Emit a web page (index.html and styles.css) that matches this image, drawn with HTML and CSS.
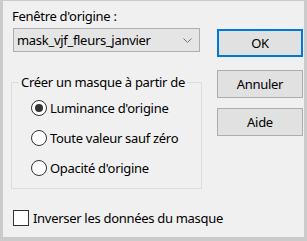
FILE: index.html
```html
<!DOCTYPE html>
<html lang="fr">
<head>
  <meta charset="UTF-8">
  <meta name="viewport" content="width=device-width, initial-scale=1.0">
  <title>Masque à partir d'une image</title>
  <link rel="stylesheet" href="styles.css">
</head>
<body>
  <div class="dialog">
    <div class="main">
      <div class="left">
        <div class="field-label">Fenêtre d'origine :</div>
        <div class="combo">
          <span>mask_vjf_fleurs_janvier</span>
          <svg class="chevron" width="9" height="5" viewBox="0 0 9 5">
            <path d="M0.5 0.5 L4.5 4.5 L8.5 0.5" fill="none" stroke="#707070" stroke-width="1"/>
          </svg>
        </div>

        <fieldset class="group">
          <legend>Créer un masque à partir de</legend>
          <label class="radio">
            <span class="dot checked"></span>Luminance d'origine
          </label>
          <label class="radio">
            <span class="dot"></span>Toute valeur sauf zéro
          </label>
          <label class="radio">
            <span class="dot"></span>Opacité d'origine
          </label>
        </fieldset>
      </div>

      <div class="buttons">
        <button type="button" class="btn default">OK</button>
        <button type="button" class="btn cancel">Annuler</button>
        <button type="button" class="btn">Aide</button>
      </div>
    </div>

    <label class="check">
      <span class="box"></span>Inverser les données du masque
    </label>
  </div>
</body>
</html>
```

FILE: styles.css
```css
body {
  margin: 0;
  background-color: #cbcbcb;
  font-family: "Noto Sans", "Open Sans", sans-serif;
  font-size: 13px;
  letter-spacing: -0.3px;
  color: #000;
}

.dialog {
  margin: 1px 3px 4px 3px;
  height: 236px;
  background-color: #f0f0f0;
  box-sizing: border-box;
}

.main {
  display: flex;
}

.left {
  width: 191px;
  margin-left: 8px;
}

.field-label {
  padding-top: 5px;
  padding-left: 1px;
  line-height: 20px;
}

.combo {
  display: flex;
  align-items: center;
  justify-content: space-between;
  margin: 2px 0 0 2px;
  width: 187px;
  height: 24px;
  padding: 0 7px 0 3px;
  box-sizing: border-box;
  background-color: #e5e5e5;
  border: 1px solid #adadad;
}

.group {
  margin: 20px 0 0 0;
  padding: 1px 0 5px 19px;
  border: 1px solid #dcdcdc;
  min-width: 0;
}

.group legend {
  margin-left: -12px;
  padding: 0 2px;
  line-height: 20px;
  white-space: nowrap;
}

.radio {
  display: flex;
  align-items: center;
  gap: 3px;
  height: 30px;
}

.dot {
  width: 16px;
  height: 16px;
  border: 1px solid #333;
  border-radius: 50%;
  background-color: #fff;
  box-sizing: border-box;
  display: flex;
  align-items: center;
  justify-content: center;
}

.dot.checked::after {
  content: "";
  width: 8px;
  height: 8px;
  border-radius: 50%;
  background-color: #333;
}

.buttons {
  display: flex;
  flex-direction: column;
  margin-left: 15px;
  padding-top: 28px;
}

.btn {
  width: 86px;
  height: 28px;
  margin-bottom: 10px;
  padding: 0;
  font-family: inherit;
  font-size: 13px;
  letter-spacing: inherit;
  color: #000;
  background-color: #e1e1e1;
  border: 1px solid #adadad;
}

.btn.default {
  border: 2px solid #0078d7;
  margin-bottom: 13px;
}

.check {
  display: flex;
  align-items: center;
  gap: 4px;
  margin: 19px 0 0 10px;
  height: 20px;
}

.box {
  width: 16px;
  height: 16px;
  border: 1px solid #333;
  background-color: #fff;
  box-sizing: border-box;
}
```
